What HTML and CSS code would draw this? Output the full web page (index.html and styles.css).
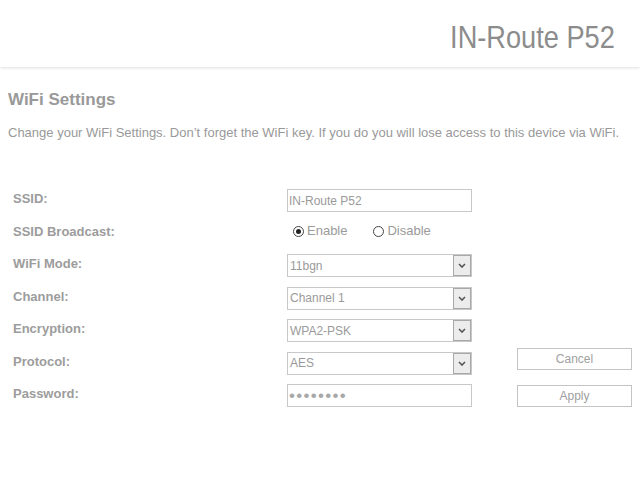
FILE: index.html
```html
<!DOCTYPE html>
<html lang="en">
<head>
<meta charset="utf-8">
<title>WiFi Settings</title>
<link rel="stylesheet" href="styles.css">
</head>
<body>
<header class="topbar">
  <div class="brand">IN-Route P52</div>
</header>
<main class="content">
  <h1 class="page-title">WiFi Settings</h1>
  <p class="intro">Change your WiFi Settings. Don’t forget the WiFi key. If you do you will lose access to this device via WiFi.</p>
  <form class="settings">
    <label class="lbl" for="ssid">SSID:</label>
    <div class="field"><input class="text-input" id="ssid" type="text" value="IN-Route P52"></div>
    <div class="spacer"></div>

    <span class="lbl">SSID Broadcast:</span>
    <div class="field radios">
      <label class="radio"><span class="dot on"></span>Enable</label>
      <label class="radio"><span class="dot"></span>Disable</label>
    </div>
    <div class="spacer"></div>

    <label class="lbl">WiFi Mode:</label>
    <div class="field"><div class="select"><span class="sel-val">11bgn</span><span class="arrow"><svg width="8" height="5" viewBox="0 0 8 5"><path d="M1 1 L4 4 L7 1" fill="none" stroke="#555" stroke-width="1.6"/></svg></span></div></div>
    <div class="spacer"></div>

    <label class="lbl">Channel:</label>
    <div class="field"><div class="select"><span class="sel-val">Channel 1</span><span class="arrow"><svg width="8" height="5" viewBox="0 0 8 5"><path d="M1 1 L4 4 L7 1" fill="none" stroke="#555" stroke-width="1.6"/></svg></span></div></div>
    <div class="spacer"></div>

    <label class="lbl">Encryption:</label>
    <div class="field"><div class="select"><span class="sel-val">WPA2-PSK</span><span class="arrow"><svg width="8" height="5" viewBox="0 0 8 5"><path d="M1 1 L4 4 L7 1" fill="none" stroke="#555" stroke-width="1.6"/></svg></span></div></div>
    <div class="spacer"></div>

    <label class="lbl">Protocol:</label>
    <div class="field"><div class="select"><span class="sel-val">AES</span><span class="arrow"><svg width="8" height="5" viewBox="0 0 8 5"><path d="M1 1 L4 4 L7 1" fill="none" stroke="#555" stroke-width="1.6"/></svg></span></div></div>
    <div class="actions">
      <button type="button" class="btn cancel">Cancel</button>
      <button type="button" class="btn">Apply</button>
    </div>

    <label class="lbl" for="pw">Password:</label>
    <div class="field"><div class="text-input pw" id="pw">••••••••</div></div>
  </form>
</main>
</body>
</html>
```
FILE: styles.css
```css
html, body {
  margin: 0;
  padding: 0;
  background: #fff;
  font-family: "Liberation Sans", Arial, sans-serif;
  color: #999;
}

.topbar {
  height: 67px;
  box-sizing: border-box;
  padding: 21px 25px 0 0;
  display: flex;
  justify-content: flex-end;
  box-shadow: 0 1px 3px rgba(0, 0, 0, 0.13);
}

.brand {
  font-size: 32px;
  line-height: 32px;
  color: #8c8c8c;
  transform: scaleX(0.85);
  transform-origin: right center;
}

.content {
  padding: 0 0 0 8px;
}

.page-title {
  margin: 23px 0 0 0;
  font-size: 17px;
  line-height: 20px;
  font-weight: bold;
  color: #999;
}

.intro {
  margin: 15px 0 0 0;
  font-size: 13px;
  line-height: 15px;
  color: #999;
}

.settings {
  margin: 49px 0 0 0;
  padding-left: 5px;
  display: grid;
  grid-template-columns: 274px 185px 113px;
  column-gap: 0;
  grid-auto-rows: 32.5px;
}

.actions {
  grid-column: 3;
  grid-row: span 2;
  margin-left: 45px;
  width: 115px;
  margin-top: -4px;
  display: flex;
  flex-direction: column;
  gap: 15px;
}

.lbl {
  font-size: 13px;
  line-height: 19px;
  font-weight: bold;
  color: #9c9c9c;
}

.field {
  display: flex;
  align-items: flex-start;
}

.text-input {
  box-sizing: border-box;
  width: 185px;
  height: 23px;
  border: 1px solid #c8c8c8;
  padding: 0 0 0 1px;
  font-family: "Liberation Sans", Arial, sans-serif;
  font-size: 12px;
  color: #9a9a9a;
  background: #fff;
  outline: none;
}

.pw {
  display: flex;
  align-items: center;
  font-size: 17px;
  letter-spacing: 1.3px;
  padding-left: 1px;
  color: #a8a8a8;
}

.radios {
  padding: 1px 0 0 6px;
  font-size: 13px;
  line-height: 16px;
  color: #9a9a9a;
}

.radio {
  display: flex;
  align-items: center;
}

.radio + .radio {
  margin-left: 26px;
}

.dot {
  box-sizing: border-box;
  width: 11px;
  height: 11px;
  border-radius: 50%;
  border: 1px solid #444;
  margin: 2px 3px 0 0;
  position: relative;
  background: #fff;
}

.dot.on::after {
  content: "";
  position: absolute;
  left: 2px;
  top: 2px;
  width: 5px;
  height: 5px;
  border-radius: 50%;
  background: #222;
}

.select {
  box-sizing: border-box;
  width: 185px;
  height: 23px;
  border: 1px solid #c8c8c8;
  display: flex;
  align-items: stretch;
  font-size: 12px;
  color: #9a9a9a;
}

.sel-val {
  flex: 1;
  padding-left: 2px;
  display: flex;
  align-items: center;
}

.arrow {
  width: 16px;
  border: 1px solid #a8a8a8;
  background: #ececec;
  display: flex;
  align-items: center;
  justify-content: center;
}

.btn {
  box-sizing: border-box;
  width: 115px;
  height: 22px;
  border: 1px solid #c4c4c4;
  background: #fff;
  font-family: "Liberation Sans", Arial, sans-serif;
  font-size: 12px;
  color: #a0a0a0;
  padding: 0;
}
```
